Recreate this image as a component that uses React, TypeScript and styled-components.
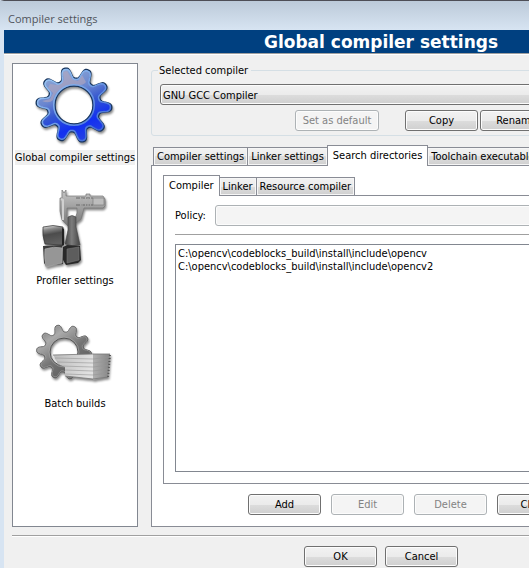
import React from "react";
import styled, { createGlobalStyle, css } from "styled-components";

const uiFont = `"DejaVu Sans Condensed", "DejaVu Sans", "Noto Sans", sans-serif`;

const GlobalStyle = createGlobalStyle`
  * { box-sizing: border-box; }
  html, body, #root { height: 100%; }
  body {
    margin: 0;
    overflow: hidden;
    background: #f0f0f0;
    color: #000;
    font: 11px/13px ${uiFont};
  }
`;

const Dialog = styled.main`
  display: flex;
  flex-direction: column;
  min-width: 762px;
  min-height: 100%;
  border-top: 1px solid #4e4e56;
  border-left: 4px solid #d7e4f2;
  border-right: 4px solid #d7e4f2;
`;

const TitleBar = styled.header`
  height: 29px;
  margin: 0 -4px;
  padding: 9px 8px 0;
  color: #50555c;
  background: linear-gradient(#bccad9, #d7e4f2);
  font: 11px/17px "Open Sans", "Noto Sans", sans-serif;
`;

const Banner = styled.h1`
  height: 24px;
  margin: 0;
  color: #fff;
  background: #004080;
  border-bottom: 1px solid #a0a0a0;
  box-shadow: 0 1px #fff;
  font: bold 17px/24px "DejaVu Sans", sans-serif;
  text-align: center;
`;

const Content = styled.div`
  display: flex;
  flex: 1;
  gap: 13px;
  padding: 9px 8px 8px;
`;

const Sidebar = styled.nav`
  width: 126px;
  flex: none;
  padding: 3px;
  background: #fff;
  border: 1px solid #828790;
`;

const CategoryButton = styled.button<{ $active?: boolean }>`
  display: flex;
  flex-direction: column;
  align-items: center;
  gap: 2px;
  width: 100%;
  height: 123px;
  padding: 0;
  border: 0;
  background: none;
  color: #000;
  font: inherit;

  svg { display: block; flex: none; }

  span {
    padding: 1px 0;
    white-space: nowrap;
    background: ${(p) => (p.$active ? "#f0f0f0" : "transparent")};
  }
`;

const Panel = styled.div`
  display: flex;
  flex: 1;
  flex-direction: column;
  padding-top: 1px;
`;

const GroupBox = styled.fieldset`
  height: 72px;
  min-width: 0;
  margin: 0 0 9px;
  padding: 7px 8px 0;
  border: 1px solid #d5dfe5;
  border-radius: 3px;

  legend { padding: 0 3px 0 1px; margin-left: -2px; }
`;

const Select = styled.select`
  display: block;
  width: 100%;
  height: 21px;
  padding: 1px 2px 0;
  appearance: none;
  color: #000;
  border: 1px solid #707070;
  border-radius: 3px;
  background: linear-gradient(#f2f2f2, #ebebeb 50%, #dddddd 50%, #cfcfcf);
  box-shadow: inset 0 0 0 1px #fcfcfc;
  font: inherit;

  &:disabled {
    background: #f4f4f4;
    border-color: #adb2b5;
    opacity: 1;
  }
`;

const Button = styled.button<{ $wide?: boolean }>`
  flex: none;
  width: ${(p) => (p.$wide ? 84 : 73)}px;
  height: 21px;
  padding: 0;
  color: #000;
  border: 1px solid #707070;
  border-radius: 3px;
  box-shadow: inset 0 0 0 1px #fcfcfc;
  background: linear-gradient(#f2f2f2, #ebebeb 50%, #dddddd 50%, #cfcfcf);
  font: inherit;

  &:disabled {
    color: #838383;
    border-color: #adb2b5;
    background: #f4f4f4;
  }
`;

const CompilerActions = styled.div`
  display: flex;
  gap: 2px;
  padding: 5px 0 0 135px;

  button:first-child { margin-right: 24px; }
`;

const TabList = styled.div<{ $inset?: boolean }>`
  display: flex;
  align-items: flex-end;
  height: 20px;
  padding-left: ${(p) => (p.$inset ? 2 : 0)}px;
`;

const Tab = styled.button<{ $active?: boolean }>`
  flex: none;
  height: 18px;
  padding: 0 3px;
  color: #000;
  border: 1px solid #898c95;
  border-bottom: 0;
  background: linear-gradient(#f2f2f2, #ebebeb 50%, #dddddd 50%, #cfcfcf);
  box-shadow: inset 0 0 0 1px #f6f6f6;
  font: inherit;
  white-space: nowrap;

  & + & { margin-left: -1px; }

  ${(p) =>
    p.$active &&
    css`
      position: relative;
      height: 21px;
      margin-bottom: -1px;
      padding: 0 5px 2px;
      background: #fff;
      box-shadow: none;
    `}
`;

const Page = styled.section`
  display: flex;
  flex: 1;
  flex-direction: column;
  border: 1px solid #898c95;
  background: #fff;
  padding: 9px 11px 11px;
`;

const PolicyRow = styled.div`
  display: flex;
  align-items: center;
  gap: 9px;
  padding-bottom: 8px;
  margin-bottom: 9px;
  border-bottom: 1px solid #a0a0a0;
`;

const DirectoryList = styled.ul`
  flex: 1;
  margin: 0;
  padding: 2px;
  list-style: none;
  border: 1px solid #828790;
  white-space: nowrap;
`;

const DirectoryActions = styled.div`
  display: flex;
  gap: 10px;
  padding: 10px 0 0 85px;
`;

const Footer = styled.footer`
  display: flex;
  justify-content: center;
  gap: 8px;
  height: 33px;
  margin: 0 8px;
  padding-top: 10px;
  border-top: 1px solid #a0a0a0;
  box-shadow: inset 0 1px #fff;
`;

function gearPath(cx: number, cy: number, outer: number, root: number, hole: number) {
  const points: string[] = [];
  for (let i = 0; i < 240; i += 1) {
    const a = (i / 240) * Math.PI * 2;
    const wave = Math.cos(10 * (a - 0.07));
    const shape = Math.tanh(1.7 * (wave - 0.1)) / Math.tanh(1.7);
    const r = (outer + root) / 2 + ((outer - root) / 2) * shape;
    points.push(`${(cx + r * Math.cos(a)).toFixed(2)} ${(cy + r * Math.sin(a)).toFixed(2)}`);
  }
  return `M${points.join("L")}ZM${cx + hole} ${cy}a${hole} ${hole} 0 1 0 ${-2 * hole} 0a${hole} ${hole} 0 1 0 ${2 * hole} 0Z`;
}

const IconArt = styled.g`
  filter: drop-shadow(1px 2px 1px #0007);
`;

function CompilerIcon() {
  return (
    <svg width="84" height="81" viewBox="0 0 84 81" aria-hidden="true">
      <defs>
        <linearGradient id="blue" x1="0.25" y1="0.05" x2="0.65" y2="0.95">
          <stop offset="0" stopColor="#8fa9d6" />
          <stop offset="0.35" stopColor="#6a86cf" />
          <stop offset="0.55" stopColor="#3557d0" />
          <stop offset="0.8" stopColor="#1230f0" />
          <stop offset="1" stopColor="#2440e4" />
        </linearGradient>
        <linearGradient id="blueRim" x1="0" y1="0" x2="1" y2="1">
          <stop offset="0" stopColor="#a5d0f6" />
          <stop offset="0.5" stopColor="#6f9de6" />
          <stop offset="1" stopColor="#3058cc" />
        </linearGradient>
      </defs>
      <IconArt>
        <path d={gearPath(41, 38, 38, 27, 19)} fill="url(#blue)" fillRule="evenodd" stroke="#18365e" strokeWidth="1.4" />
        <path
          d="M9 34q7 3 11-1q2-8 8-11q7-5 14-4q8 1 11-3l-4-7-4 6-6-2-5-8-4 1 1 8-6 5-8-1-2 4 5 5-3 6z"
          fill="#b0a6bd"
          opacity="0.65"
        />
        <path d={gearPath(41, 38, 36.6, 25.6, 20.3)} fill="none" stroke="url(#blueRim)" strokeWidth="1.5" />
      </IconArt>
    </svg>
  );
}

function ProfilerIcon() {
  return (
    <svg width="84" height="81" viewBox="0 0 84 81" aria-hidden="true">
      <defs>
        <linearGradient id="metal" x1="0" y1="0" x2="0" y2="1">
          <stop offset="0" stopColor="#c6c6c6" />
          <stop offset="0.55" stopColor="#9a9a9a" />
          <stop offset="1" stopColor="#777" />
        </linearGradient>
        <linearGradient id="block" x1="0" y1="0" x2="0.2" y2="1">
          <stop offset="0" stopColor="#eee" />
          <stop offset="0.25" stopColor="#888" />
          <stop offset="0.5" stopColor="#4c4c4c" />
          <stop offset="1" stopColor="#606060" />
        </linearGradient>
        <linearGradient id="wedge">
          <stop offset="0" stopColor="#444" />
          <stop offset="0.45" stopColor="#7c7c7c" />
          <stop offset="1" stopColor="#444" />
        </linearGradient>
      </defs>
      <IconArt>
        <path
          d="M29 0l2 3 2-3v6h20V4h4v2h13l2 3v7l-2 2H51l-3 11-5 4-2-1 3-9V18h-10v9l2 5-1 4-6-6-2-9V8h2z"
          fill="url(#metal)"
          stroke="#777"
          strokeWidth="0.7"
        />
        <path d="M43 8h17M43 15h17" stroke="#666" strokeWidth="1" strokeDasharray="4 1" />
        <path d="M49 8v8M55 8v8" stroke="#aaa" strokeWidth="1" />
        <path d="M60 8h11v7H60z" fill="#bdbdbd" stroke="#777" strokeWidth="0.6" />
        <path d="M28 9l2 1v20" fill="none" stroke="#d0d0d0" strokeWidth="2" />
        <path d="M35 27q4-3 8 0v10l4 18q-8 2-15-1l3-14z" fill="url(#wedge)" stroke="#444" strokeWidth="0.6" />
        <path d="M10 37q10-3 20 0l1 16-2 2-17-1q-3-9-2-17z" fill="url(#block)" stroke="#333" strokeWidth="0.7" />
        <path d="M29 38l2 1v16l-2 1z" fill="#222" />
        <path d="M10 56l19-1 1 19-17 2-2-3z" fill="#3a3a3a" />
        <path d="M12 59q9-3 17-1v15l-16 4q-2-9-1-18z" fill="#969696" stroke="#aaa" strokeWidth="0.7" />
        <path d="M30 57l4-2 13 1 1 14-3 3-12 2-3-5z" fill="#292929" />
        <path d="M34 59l12-2v13l-12 3z" fill="#5d5d5d" stroke="#777" strokeWidth="0.6" />
      </IconArt>
    </svg>
  );
}

function BatchIcon() {
  return (
    <svg width="84" height="81" viewBox="0 0 84 81" aria-hidden="true">
      <defs>
        <linearGradient id="grayGear" x1="0.1" y1="0" x2="0.8" y2="1">
          <stop offset="0" stopColor="#777" />
          <stop offset="0.25" stopColor="#aaa" />
          <stop offset="0.55" stopColor="#747474" />
          <stop offset="1" stopColor="#555" />
        </linearGradient>
        <linearGradient id="paperFront" x1="0" y1="0" x2="1" y2="0.2">
          <stop offset="0" stopColor="#bababa" />
          <stop offset="1" stopColor="#e1e1e1" />
        </linearGradient>
        <linearGradient id="paperSide">
          <stop offset="0" stopColor="#b0b0b0" />
          <stop offset="1" stopColor="#858585" />
        </linearGradient>
      </defs>
      <IconArt>
        <path d={gearPath(31, 39, 27.5, 20, 14)} fill="url(#grayGear)" fillRule="evenodd" stroke="#555" strokeWidth="1" />
        <path d={gearPath(31, 39, 26.5, 19, 15)} fill="none" stroke="#aaa" strokeWidth="0.8" opacity="0.7" />
        <path d="M20 42l40-1v25l-28-3v-9l-5-2z" fill="url(#paperFront)" />
        <path d="M60 41h17l-2 23-15 3z" fill="url(#paperSide)" />
        <path
          d="M22 45l38 1 16-2M24 49l36 1 16-2M27 53l33 1 16-2M32 57l28 1 15-2M32 61l28 1 15-2"
          fill="none"
          stroke="#969696"
          strokeWidth="0.6"
        />
        <path d="M20 42l40-1h17M32 63l28 3 15-2" fill="none" stroke="#777" strokeWidth="0.8" />
        <path d="M77 42l-2 22" stroke="#555" strokeWidth="2" strokeDasharray="1 2" />
      </IconArt>
    </svg>
  );
}

const categories = [
  { label: "Global compiler settings", icon: <CompilerIcon /> },
  { label: "Profiler settings", icon: <ProfilerIcon /> },
  { label: "Batch builds", icon: <BatchIcon /> },
];

const settingsTabs = ["Compiler settings", "Linker settings", "Search directories", "Toolchain executables"];
const directoryTabs = ["Compiler", "Linker", "Resource compiler"];
const directories = [
  "C:\\opencv\\codeblocks_build\\install\\include\\opencv",
  "C:\\opencv\\codeblocks_build\\install\\include\\opencv2",
];

function Tabs({ names, active }: { names: string[]; active: string }) {
  return (
    <TabList role="tablist" $inset={names[0] !== active}>
      {names.map((name) => (
        <Tab key={name} role="tab" aria-selected={name === active} $active={name === active}>
          {name}
        </Tab>
      ))}
    </TabList>
  );
}

export default function App() {
  return (
    <>
      <GlobalStyle />
      <Dialog>
        <TitleBar>Compiler settings</TitleBar>
        <Banner>Global compiler settings</Banner>
        <Content>
          <Sidebar aria-label="Categories">
            {categories.map(({ label, icon }, i) => (
              <CategoryButton key={label} $active={i === 0}>
                {icon}
                <span>{label}</span>
              </CategoryButton>
            ))}
          </Sidebar>
          <Panel>
            <GroupBox>
              <legend>Selected compiler</legend>
              <Select aria-label="Selected compiler">
                <option>GNU GCC Compiler</option>
              </Select>
              <CompilerActions>
                <Button $wide disabled>Set as default</Button>
                <Button>Copy</Button>
                <Button>Rename</Button>
              </CompilerActions>
            </GroupBox>
            <Tabs names={settingsTabs} active="Search directories" />
            <Page>
              <Tabs names={directoryTabs} active="Compiler" />
              <Page>
                <PolicyRow>
                  <label htmlFor="policy">Policy:</label>
                  <Select id="policy" disabled />
                </PolicyRow>
                <DirectoryList>
                  {directories.map((path) => (
                    <li key={path}>{path}</li>
                  ))}
                </DirectoryList>
              </Page>
              <DirectoryActions>
                <Button>Add</Button>
                <Button disabled>Edit</Button>
                <Button disabled>Delete</Button>
                <Button>Clear</Button>
              </DirectoryActions>
            </Page>
          </Panel>
        </Content>
        <Footer>
          <Button>OK</Button>
          <Button>Cancel</Button>
        </Footer>
      </Dialog>
    </>
  );
}
